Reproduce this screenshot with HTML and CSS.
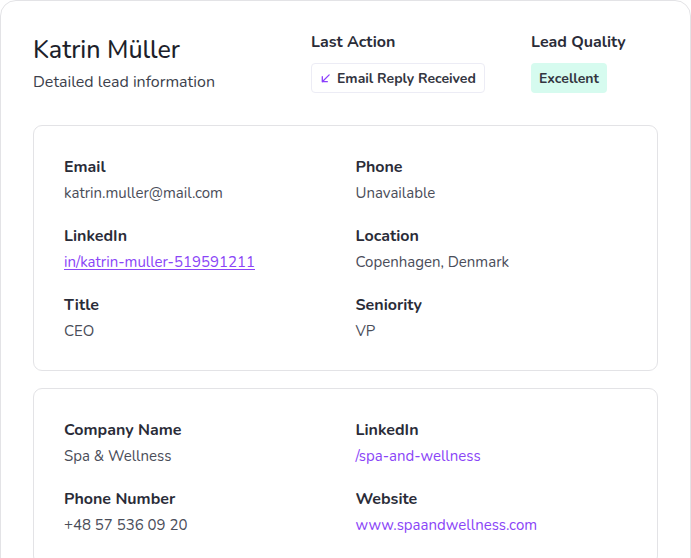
FILE: index.html
```html
<!DOCTYPE html>
<html lang="en">
<head>
<meta charset="utf-8">
<title>Lead details</title>
<link rel="stylesheet" href="styles.css">
</head>
<body>
<div class="panel">
  <header class="header">
    <div class="heading">
      <h1 class="name">Katrin Müller</h1>
      <p class="subtitle">Detailed lead information</p>
    </div>
    <div class="meta meta-action">
      <div class="meta-label">Last Action</div>
      <span class="badge badge-action">
        <svg class="badge-icon" viewBox="0 0 12 12" width="12" height="12" aria-hidden="true">
          <path d="M10 2 L2.5 9.5 M2.5 4 V9.5 H8" fill="none" stroke="currentColor" stroke-width="1.4" stroke-linecap="round" stroke-linejoin="round"/>
        </svg>
        Email Reply Received
      </span>
    </div>
    <div class="meta meta-quality">
      <div class="meta-label">Lead Quality</div>
      <span class="badge badge-quality">Excellent</span>
    </div>
  </header>

  <section class="card">
    <div class="field">
      <div class="label">Email</div>
      <div class="value">katrin.muller@mail.com</div>
    </div>
    <div class="field">
      <div class="label">Phone</div>
      <div class="value">Unavailable</div>
    </div>
    <div class="field">
      <div class="label">LinkedIn</div>
      <div class="value"><a class="link underline" href="#">in/katrin-muller-519591211</a></div>
    </div>
    <div class="field">
      <div class="label">Location</div>
      <div class="value">Copenhagen, Denmark</div>
    </div>
    <div class="field">
      <div class="label">Title</div>
      <div class="value">CEO</div>
    </div>
    <div class="field">
      <div class="label">Seniority</div>
      <div class="value">VP</div>
    </div>
  </section>

  <section class="card">
    <div class="field">
      <div class="label">Company Name</div>
      <div class="value">Spa &amp; Wellness</div>
    </div>
    <div class="field">
      <div class="label">LinkedIn</div>
      <div class="value"><a class="link" href="#">/spa-and-wellness</a></div>
    </div>
    <div class="field">
      <div class="label">Phone Number</div>
      <div class="value">+48 57 536 09 20</div>
    </div>
    <div class="field">
      <div class="label">Website</div>
      <div class="value"><a class="link" href="#">www.spaandwellness.com</a></div>
    </div>
  </section>
</div>
</body>
</html>
```

FILE: styles.css
```css
html, body {
  margin: 0;
  padding: 0;
  height: 558px;
  overflow: hidden;
  background: #ffffff;
}

body {
  font-family: "Nunito", "Lato", "Noto Sans", sans-serif;
  color: #2a2c38;
}

.panel {
  box-sizing: border-box;
  width: 691px;
  min-height: 700px;
  border: 1px solid #e3e3e6;
  border-radius: 16px;
  padding: 33px 32px 40px 32px;
}

.header {
  display: flex;
  align-items: flex-start;
  margin-bottom: 32px;
}

.heading {
  flex: 1;
}

.name {
  margin: 0;
  font-size: 25px;
  line-height: 32px;
  font-weight: 500;
  color: #1d1f2b;
}

.subtitle {
  margin: 0;
  margin-top: 5px;
  font-size: 16px;
  line-height: 22px;
  color: #3c3f4c;
}

.meta-action {
  width: 220px;
}

.meta-quality {
  width: 127px;
}

.meta-label {
  font-size: 16px;
  line-height: 22px;
  font-weight: 700;
  color: #2a2c38;
  margin-top: -3px;
  margin-bottom: 10px;
}

.badge {
  box-sizing: border-box;
  display: inline-flex;
  align-items: center;
  gap: 6px;
  height: 30px;
  padding: 0 8px;
  border-radius: 4px;
  font-size: 14px;
  font-weight: 700;
  color: #33353f;
}

.badge-action {
  border: 1px solid #ececf5;
  background: #ffffff;
}

.badge-icon {
  color: #8b3ffc;
  width: 11px;
  height: 11px;
}

.badge-quality {
  background: #d6fbef;
}

.card {
  display: grid;
  grid-template-columns: 1fr 1fr;
  column-gap: 20px;
  row-gap: 21px;
  border: 1px solid #e3e3e6;
  border-radius: 9px;
  padding: 30px 30px 28px 30px;
  margin-bottom: 17px;
}

.label {
  font-size: 16px;
  line-height: 22px;
  font-weight: 700;
  color: #2a2c38;
  margin-bottom: 4px;
}

.value {
  font-size: 15px;
  line-height: 22px;
  color: #4a4d59;
}

.link {
  color: #8a45f7;
  text-decoration: none;
}

.link.underline {
  text-decoration: underline;
  text-underline-offset: 2px;
}
```
